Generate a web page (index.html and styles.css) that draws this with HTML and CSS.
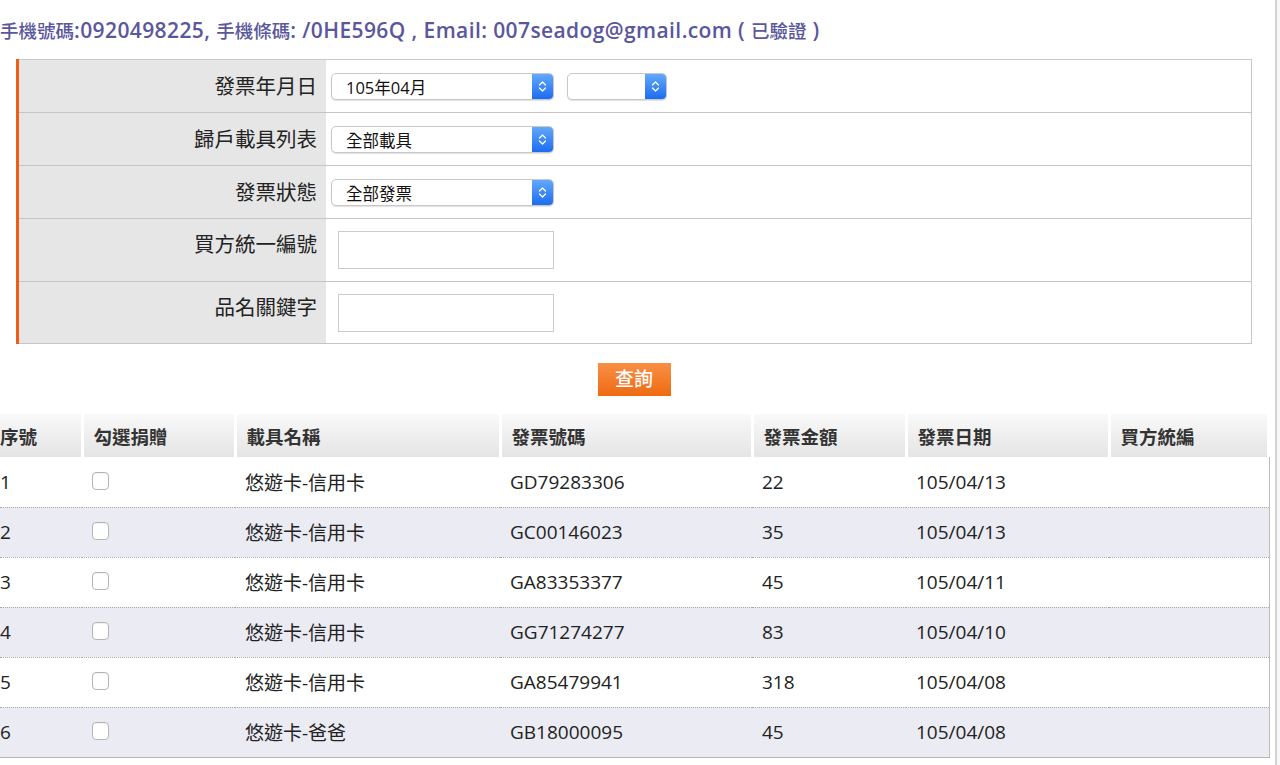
FILE: index.html
```html
<!DOCTYPE html>
<html lang="zh-Hant">
<head>
<meta charset="utf-8">
<title>發票查詢</title>
<link rel="stylesheet" href="styles.css">
</head>
<body>
<div class="main">
  <p class="info"><span class="cjk">手機號碼</span>:0920498225, <span class="cjk">手機條碼</span>: /0HE596Q , Email: 007seadog@gmail.com ( <span class="cjk">已驗證</span> )</p>

  <table class="form">
    <tr class="r1">
      <th>發票年月日</th>
      <td>
        <span class="select w1"><span class="val">105年04月</span><span class="arrow"><svg width="9" height="13" viewBox="0 0 9 13"><path d="M1.5 5 L4.5 2 L7.5 5 M1.5 8 L4.5 11 L7.5 8" fill="none" stroke="#fff" stroke-width="1.3" stroke-linecap="round" stroke-linejoin="round"/></svg></span></span>
        <span class="select w2"><span class="val"></span><span class="arrow"><svg width="9" height="13" viewBox="0 0 9 13"><path d="M1.5 5 L4.5 2 L7.5 5 M1.5 8 L4.5 11 L7.5 8" fill="none" stroke="#fff" stroke-width="1.3" stroke-linecap="round" stroke-linejoin="round"/></svg></span></span>
      </td>
    </tr>
    <tr class="r2">
      <th>歸戶載具列表</th>
      <td>
        <span class="select w1"><span class="val">全部載具</span><span class="arrow"><svg width="9" height="13" viewBox="0 0 9 13"><path d="M1.5 5 L4.5 2 L7.5 5 M1.5 8 L4.5 11 L7.5 8" fill="none" stroke="#fff" stroke-width="1.3" stroke-linecap="round" stroke-linejoin="round"/></svg></span></span>
      </td>
    </tr>
    <tr class="r3">
      <th>發票狀態</th>
      <td>
        <span class="select w1"><span class="val">全部發票</span><span class="arrow"><svg width="9" height="13" viewBox="0 0 9 13"><path d="M1.5 5 L4.5 2 L7.5 5 M1.5 8 L4.5 11 L7.5 8" fill="none" stroke="#fff" stroke-width="1.3" stroke-linecap="round" stroke-linejoin="round"/></svg></span></span>
      </td>
    </tr>
    <tr class="r4">
      <th class="high">買方統一編號</th>
      <td><input class="text" type="text"></td>
    </tr>
    <tr class="r5">
      <th class="high">品名關鍵字</th>
      <td><input class="text" type="text"></td>
    </tr>
  </table>

  <div class="actions"><button class="btn" type="button">查詢</button></div>

  <table class="list">
    <thead>
      <tr>
        <th class="c1">序號</th>
        <th class="c2">勾選捐贈</th>
        <th class="c3">載具名稱</th>
        <th class="c4">發票號碼</th>
        <th class="c5">發票金額</th>
        <th class="c6">發票日期</th>
        <th class="c7">買方統編</th>
      </tr>
    </thead>
    <tbody>
      <tr><td class="c1">1</td><td class="c2"><span class="cb"></span></td><td>悠遊卡-信用卡</td><td>GD79283306</td><td>22</td><td>105/04/13</td><td></td></tr>
      <tr class="alt"><td class="c1">2</td><td class="c2"><span class="cb"></span></td><td>悠遊卡-信用卡</td><td>GC00146023</td><td>35</td><td>105/04/13</td><td></td></tr>
      <tr><td class="c1">3</td><td class="c2"><span class="cb"></span></td><td>悠遊卡-信用卡</td><td>GA83353377</td><td>45</td><td>105/04/11</td><td></td></tr>
      <tr class="alt"><td class="c1">4</td><td class="c2"><span class="cb"></span></td><td>悠遊卡-信用卡</td><td>GG71274277</td><td>83</td><td>105/04/10</td><td></td></tr>
      <tr><td class="c1">5</td><td class="c2"><span class="cb"></span></td><td>悠遊卡-信用卡</td><td>GA85479941</td><td>318</td><td>105/04/08</td><td></td></tr>
      <tr class="alt last"><td class="c1">6</td><td class="c2"><span class="cb"></span></td><td>悠遊卡-爸爸</td><td>GB18000095</td><td>45</td><td>105/04/08</td><td></td></tr>
    </tbody>
  </table>
</div>
</body>
</html>
```

FILE: styles.css
```css
html, body {
  margin: 0;
  padding: 0;
  background: #f7f7f7;
}
body {
  font-family: "Open Sans", "Noto Sans CJK TC", sans-serif;
  color: #222;
}
.main {
  width: 1275px;
  height: 765px;
  background: #fff;
  border-right: 2px solid #d2d2d2;
  overflow: hidden;
}
.info {
  margin: 0;
  padding-top: 18px;
  height: 24px;
  line-height: 24px;
  font-size: 21px;
  font-weight: 600;
  letter-spacing: 0.4px;
  color: #5a579c;
  white-space: nowrap;
}
.info .cjk {
  font-size: 18.5px;
  font-weight: 500;
  letter-spacing: 0;
}

/* search form */
.form {
  margin: 17px 0 0 16px;
  width: 1236px;
  border-collapse: collapse;
  border-top: 1px solid #c9c9c9;
  border-right: 1px solid #c9c9c9;
  border-bottom: 1px solid #c9c9c9;
  border-left: 3px solid #ef5d17;
}
.form tr {
  border-bottom: 1px solid #c4c4c4;
}
.form th {
  width: 298px;
  background: #e6e6e6;
  text-align: right;
  padding: 0 9px 3px 0;
  font-weight: normal;
  font-size: 20.5px;
  color: #222;
  vertical-align: middle;
}
.form th.high {
  padding-bottom: 14px;
}
.form td {
  padding: 0 0 0 5px;
  vertical-align: middle;
}
.form .r1, .form .r2, .form .r3 { height: 53px; }
.form .r4 { height: 63px; }
.form .r5 { height: 62px; }

.select {
  display: inline-flex;
  vertical-align: middle;
  box-sizing: border-box;
  height: 27px;
  border: 1px solid #c8c8c8;
  border-radius: 5px;
  background: #fff;
  box-shadow: 0 1px 1px rgba(0,0,0,0.12);
  overflow: hidden;
}
.select.w1 { width: 223px; }
.select.w2 { width: 100px; margin-left: 9px; }
.select .val {
  flex: 1;
  padding-left: 14px;
  font-size: 16.5px;
  line-height: 27px;
  color: #111;
}
.select .arrow {
  width: 21px;
  background: linear-gradient(#63a8fb, #1c6cf1);
  display: flex;
  align-items: center;
  justify-content: center;
}
.text {
  box-sizing: border-box;
  width: 216px;
  height: 38px;
  margin: 0 0 0 7px;
  border: 1px solid #cbcbcb;
  background: #fff;
  vertical-align: middle;
}

.actions {
  margin: 19px 0 0 16px;
  width: 1236px;
  text-align: center;
}
.btn {
  width: 73px;
  height: 33px;
  border: none;
  border-radius: 0;
  padding: 0;
  background: linear-gradient(#f98f45, #ee6a12);
  color: #fff;
  font-family: "Open Sans", "Noto Sans CJK TC", sans-serif;
  font-size: 19px;
  font-weight: 500;
  line-height: 33px;
}

/* result list */
.list {
  margin-top: 18px;
  width: 1269px;
  border-collapse: collapse;
  table-layout: fixed;
}
.list th {
  height: 43px;
  padding: 0 0 0 10px;
  text-align: left;
  font-size: 18.5px;
  font-weight: bold;
  color: #333;
  background: linear-gradient(#f9f9f9, #e4e4e4);
  border-right: 3px solid #fff;
  box-sizing: border-box;
}
.list th.c7 {
  border-right: 4px solid #fff;
}
.list .c1 { width: 82px; padding-left: 0; }
.list .c2 { width: 153px; }
.list .c3 { width: 265px; }
.list .c4 { width: 252px; }
.list .c5 { width: 154px; }
.list .c6 { width: 203px; }
.list .c7 { width: 160px; }
.list tbody tr {
  height: 50px;
  border-bottom: 1px dotted #a9a9a9;
}
.list tbody tr.alt {
  background: #ebebf3;
}
.list tbody tr.last {
  border-bottom: 1px solid #b4b4b4;
}
.list tbody {
  border-right: 1px solid #bdbdbd;
}
.list td {
  padding: 0 0 0 10px;
  font-size: 19px;
  color: #222;
  vertical-align: middle;
}
.list td.c1 { padding-left: 0; }
.cb {
  display: inline-block;
  vertical-align: middle;
  width: 15px;
  height: 16px;
  border: 1px solid #b5b5b5;
  border-radius: 4px;
  background: #fff;
  box-shadow: inset 0 1px 1px rgba(0,0,0,0.06);
  margin-top: -6px;
}
```
